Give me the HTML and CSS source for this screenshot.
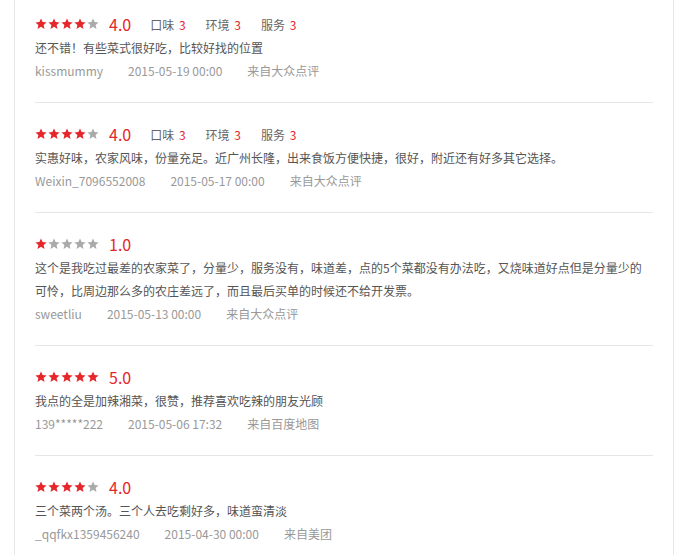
FILE: index.html
```html
<!DOCTYPE html>
<html lang="zh-CN">

<head>
    <meta charset="UTF-8">
    <meta name="viewport" content="width=device-width, initial-scale=1.0">
    <title>评论</title>
    <link rel="stylesheet" href="styles.css">
</head>

<body>
    <!-- 评论列表 -->
    <div class="panel">
        <ul class="reviews">
            <li class="review">
                <div class="rating">
                    <span class="stars">
                        <svg class="star on" viewBox="0 0 12 12"><path d="M6 0.4l1.6 3.7 4 0.3-3 2.6 0.9 3.9L6 8.8 2.5 10.9l0.9-3.9-3-2.6 4-0.3z"/></svg>
                        <svg class="star on" viewBox="0 0 12 12"><path d="M6 0.4l1.6 3.7 4 0.3-3 2.6 0.9 3.9L6 8.8 2.5 10.9l0.9-3.9-3-2.6 4-0.3z"/></svg>
                        <svg class="star on" viewBox="0 0 12 12"><path d="M6 0.4l1.6 3.7 4 0.3-3 2.6 0.9 3.9L6 8.8 2.5 10.9l0.9-3.9-3-2.6 4-0.3z"/></svg>
                        <svg class="star on" viewBox="0 0 12 12"><path d="M6 0.4l1.6 3.7 4 0.3-3 2.6 0.9 3.9L6 8.8 2.5 10.9l0.9-3.9-3-2.6 4-0.3z"/></svg>
                        <svg class="star" viewBox="0 0 12 12"><path d="M6 0.4l1.6 3.7 4 0.3-3 2.6 0.9 3.9L6 8.8 2.5 10.9l0.9-3.9-3-2.6 4-0.3z"/></svg>
                    </span>
                    <span class="score">4.0</span>
                    <span class="sub">口味 <em>3</em></span>
                    <span class="sub">环境 <em>3</em></span>
                    <span class="sub">服务 <em>3</em></span>
                </div>
                <p class="text">还不错！有些菜式很好吃，比较好找的位置</p>
                <div class="meta"><span>kissmummy</span><span>2015-05-19 00:00</span><span>来自大众点评</span></div>
            </li>
            <li class="review">
                <div class="rating">
                    <span class="stars">
                        <svg class="star on" viewBox="0 0 12 12"><path d="M6 0.4l1.6 3.7 4 0.3-3 2.6 0.9 3.9L6 8.8 2.5 10.9l0.9-3.9-3-2.6 4-0.3z"/></svg>
                        <svg class="star on" viewBox="0 0 12 12"><path d="M6 0.4l1.6 3.7 4 0.3-3 2.6 0.9 3.9L6 8.8 2.5 10.9l0.9-3.9-3-2.6 4-0.3z"/></svg>
                        <svg class="star on" viewBox="0 0 12 12"><path d="M6 0.4l1.6 3.7 4 0.3-3 2.6 0.9 3.9L6 8.8 2.5 10.9l0.9-3.9-3-2.6 4-0.3z"/></svg>
                        <svg class="star on" viewBox="0 0 12 12"><path d="M6 0.4l1.6 3.7 4 0.3-3 2.6 0.9 3.9L6 8.8 2.5 10.9l0.9-3.9-3-2.6 4-0.3z"/></svg>
                        <svg class="star" viewBox="0 0 12 12"><path d="M6 0.4l1.6 3.7 4 0.3-3 2.6 0.9 3.9L6 8.8 2.5 10.9l0.9-3.9-3-2.6 4-0.3z"/></svg>
                    </span>
                    <span class="score">4.0</span>
                    <span class="sub">口味 <em>3</em></span>
                    <span class="sub">环境 <em>3</em></span>
                    <span class="sub">服务 <em>3</em></span>
                </div>
                <p class="text">实惠好味，农家风味，份量充足。近广州长隆，出来食饭方便快捷，很好，附近还有好多其它选择。</p>
                <div class="meta"><span>Weixin_7096552008</span><span>2015-05-17 00:00</span><span>来自大众点评</span></div>
            </li>
            <li class="review">
                <div class="rating">
                    <span class="stars">
                        <svg class="star on" viewBox="0 0 12 12"><path d="M6 0.4l1.6 3.7 4 0.3-3 2.6 0.9 3.9L6 8.8 2.5 10.9l0.9-3.9-3-2.6 4-0.3z"/></svg>
                        <svg class="star" viewBox="0 0 12 12"><path d="M6 0.4l1.6 3.7 4 0.3-3 2.6 0.9 3.9L6 8.8 2.5 10.9l0.9-3.9-3-2.6 4-0.3z"/></svg>
                        <svg class="star" viewBox="0 0 12 12"><path d="M6 0.4l1.6 3.7 4 0.3-3 2.6 0.9 3.9L6 8.8 2.5 10.9l0.9-3.9-3-2.6 4-0.3z"/></svg>
                        <svg class="star" viewBox="0 0 12 12"><path d="M6 0.4l1.6 3.7 4 0.3-3 2.6 0.9 3.9L6 8.8 2.5 10.9l0.9-3.9-3-2.6 4-0.3z"/></svg>
                        <svg class="star" viewBox="0 0 12 12"><path d="M6 0.4l1.6 3.7 4 0.3-3 2.6 0.9 3.9L6 8.8 2.5 10.9l0.9-3.9-3-2.6 4-0.3z"/></svg>
                    </span>
                    <span class="score">1.0</span>
                </div>
                <p class="text">这个是我吃过最差的农家菜了，分量少，服务没有，味道差，点的5个菜都没有办法吃，又烧味道好点但是分量少的可怜，比周边那么多的农庄差远了，而且最后买单的时候还不给开发票。</p>
                <div class="meta"><span>sweetliu</span><span>2015-05-13 00:00</span><span>来自大众点评</span></div>
            </li>
            <li class="review">
                <div class="rating">
                    <span class="stars">
                        <svg class="star on" viewBox="0 0 12 12"><path d="M6 0.4l1.6 3.7 4 0.3-3 2.6 0.9 3.9L6 8.8 2.5 10.9l0.9-3.9-3-2.6 4-0.3z"/></svg>
                        <svg class="star on" viewBox="0 0 12 12"><path d="M6 0.4l1.6 3.7 4 0.3-3 2.6 0.9 3.9L6 8.8 2.5 10.9l0.9-3.9-3-2.6 4-0.3z"/></svg>
                        <svg class="star on" viewBox="0 0 12 12"><path d="M6 0.4l1.6 3.7 4 0.3-3 2.6 0.9 3.9L6 8.8 2.5 10.9l0.9-3.9-3-2.6 4-0.3z"/></svg>
                        <svg class="star on" viewBox="0 0 12 12"><path d="M6 0.4l1.6 3.7 4 0.3-3 2.6 0.9 3.9L6 8.8 2.5 10.9l0.9-3.9-3-2.6 4-0.3z"/></svg>
                        <svg class="star on" viewBox="0 0 12 12"><path d="M6 0.4l1.6 3.7 4 0.3-3 2.6 0.9 3.9L6 8.8 2.5 10.9l0.9-3.9-3-2.6 4-0.3z"/></svg>
                    </span>
                    <span class="score">5.0</span>
                </div>
                <p class="text">我点的全是加辣湘菜，很赞，推荐喜欢吃辣的朋友光顾</p>
                <div class="meta"><span>139*****222</span><span>2015-05-06 17:32</span><span>来自百度地图</span></div>
            </li>
            <li class="review">
                <div class="rating">
                    <span class="stars">
                        <svg class="star on" viewBox="0 0 12 12"><path d="M6 0.4l1.6 3.7 4 0.3-3 2.6 0.9 3.9L6 8.8 2.5 10.9l0.9-3.9-3-2.6 4-0.3z"/></svg>
                        <svg class="star on" viewBox="0 0 12 12"><path d="M6 0.4l1.6 3.7 4 0.3-3 2.6 0.9 3.9L6 8.8 2.5 10.9l0.9-3.9-3-2.6 4-0.3z"/></svg>
                        <svg class="star on" viewBox="0 0 12 12"><path d="M6 0.4l1.6 3.7 4 0.3-3 2.6 0.9 3.9L6 8.8 2.5 10.9l0.9-3.9-3-2.6 4-0.3z"/></svg>
                        <svg class="star on" viewBox="0 0 12 12"><path d="M6 0.4l1.6 3.7 4 0.3-3 2.6 0.9 3.9L6 8.8 2.5 10.9l0.9-3.9-3-2.6 4-0.3z"/></svg>
                        <svg class="star" viewBox="0 0 12 12"><path d="M6 0.4l1.6 3.7 4 0.3-3 2.6 0.9 3.9L6 8.8 2.5 10.9l0.9-3.9-3-2.6 4-0.3z"/></svg>
                    </span>
                    <span class="score">4.0</span>
                </div>
                <p class="text">三个菜两个汤。三个人去吃剩好多，味道蛮清淡</p>
                <div class="meta"><span>_qqfkx1359456240</span><span>2015-04-30 00:00</span><span>来自美团</span></div>
            </li>
        </ul>
    </div>
</body>

</html>
```

FILE: styles.css
```css
/* 页面 */
body {
    margin: 0;
    background: #fff;
    font-family: "Noto Sans CJK SC", "Microsoft YaHei", sans-serif;
    font-size: 12px;
    color: #555;
}

/* 外框 */
.panel {
    width: 618px;
    margin-left: 14px;
    padding: 0 20px;
    border-left: 1px solid #e6e6e6;
    border-right: 1px solid #e6e6e6;
    min-height: 555px;
}

.reviews {
    list-style: none;
    margin: 0;
    padding: 0;
}

/* 单条评论 */
.review {
    padding: 21px 0 20px;
    border-bottom: 1px solid #e6e6e6;
}

.review:first-child {
    padding-top: 14px;
}

.review:last-child {
    border-bottom: none;
}

/* 评分行 */
.rating {
    display: flex;
    align-items: center;
    height: 20px;
    margin-bottom: 2px;
}

.stars {
    display: flex;
    gap: 1px;
}

.star {
    width: 12px;
    height: 12px;
    fill: #aaa;
}

.star.on {
    fill: #e5262b;
}

.score {
    margin-left: 10px;
    margin-right: 19px;
    font-size: 16px;
    color: #e5262b;
    line-height: 20px;
}

.sub {
    margin-right: 20px;
    font-size: 12px;
    color: #666;
}

.sub em {
    font-style: normal;
    color: #e5262b;
    margin-left: 2px;
}

/* 评论内容 */
.text {
    margin: 0;
    line-height: 23px;
    color: #555;
}

/* 用户 时间 来源 */
.meta {
    line-height: 23px;
    color: #999;
    font-size: 12px;
}

.meta span {
    margin-right: 25px;
}
```
